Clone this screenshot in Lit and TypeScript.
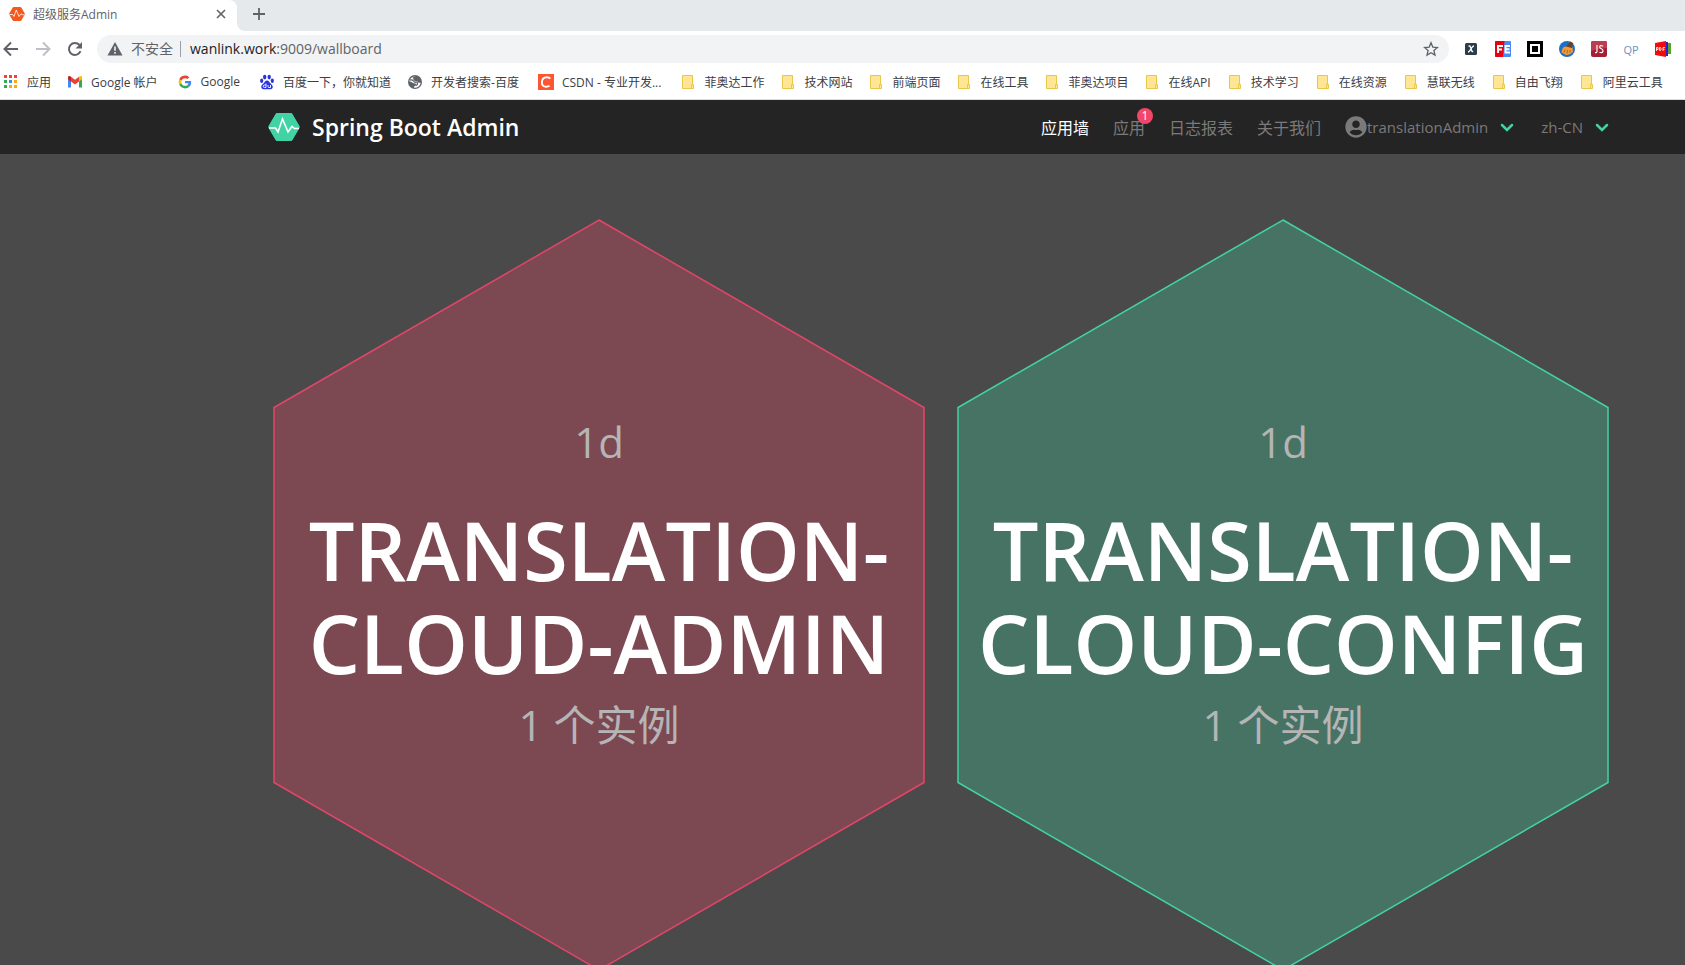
import { LitElement, html, css, svg } from "lit";
import { customElement, property } from "lit/decorators.js";
import { classMap } from "lit/directives/class-map.js";

const fontStack = css`"Open Sans", "Noto Sans CJK SC", sans-serif`;

const folderIcon = html`<svg width="16" height="16" viewBox="0 0 16 16">
  <path d="M2.5 1.5h10v13h-10z" fill="#ffe694" stroke="#e9c64c" />
  <path d="M11.5 10.5h2v4h-2z" fill="#ffe694" stroke="#e9c64c" />
</svg>`;

const appsIcon = html`<svg width="16" height="16" viewBox="0 0 16 16">
  ${["#f44336", "#f44336", "#f44336", "#34a853", "#2196f3", "#fba912", "#34a853", "#fba912", "#fba912"].map(
    (c, i) => svg`<rect x=${1 + (i % 3) * 5} y=${1 + Math.floor(i / 3) * 5} width="3" height="3" fill=${c} />`,
  )}
</svg>`;

const gmailIcon = html`<svg width="16" height="16" viewBox="0 0 16 16">
  <path d="M1 4v9.5h3V7z" fill="#4285f4" />
  <path d="M15 4v9.5h-3V7z" fill="#34a853" />
  <path d="M1 3.5C1 2 2.5 1.6 4 2.7V7.5L1 5.3z" fill="#c5221f" />
  <path d="M15 3.5C15 2 13.5 1.6 12 2.7V7.5l3-2.2z" fill="#fbbc04" />
  <path d="M4 2.7l4 3 4-3v4.8l-4 3-4-3z" fill="#ea4335" />
</svg>`;

const googleIcon = html`<svg width="16" height="16" viewBox="-6 -6 60 60">
  <path fill="#ea4335" d="M24 9.5c3.540 0 6.710 1.220 9.210 3.600l6.850-6.850C35.900 2.380 30.470 0 24 0 14.620 0 6.510 5.380 2.560 13.220l7.980 6.190C12.430 13.720 17.740 9.500 24 9.500z" />
  <path fill="#4285f4" d="M46.980 24.550c0-1.570-.15-3.090-.38-4.550H24v9.020h12.940c-.58 2.960-2.260 5.480-4.780 7.180l7.730 6c4.510-4.180 7.090-10.360 7.090-17.650z" />
  <path fill="#fbbc05" d="M10.530 28.590a14.500 14.500 0 0 1 0-9.180l-7.980-6.190a24 24 0 0 0 0 21.560z" />
  <path fill="#34a853" d="M24 48c6.480 0 11.930-2.130 15.890-5.810l-7.730-6c-2.150 1.450-4.920 2.300-8.160 2.300-6.260 0-11.570-4.220-13.470-9.910l-7.980 6.190C6.510 42.620 14.620 48 24 48z" />
</svg>`;

const baiduIcon = html`<svg width="16" height="16" viewBox="0 0 16 16" fill="#2932e1">
  <ellipse cx="5.7" cy="3.1" rx="1.7" ry="2.3" />
  <ellipse cx="10.2" cy="3.1" rx="1.7" ry="2.3" />
  <ellipse cx="2.7" cy="6.8" rx="1.6" ry="2.2" />
  <ellipse cx="13.3" cy="6.8" rx="1.6" ry="2.2" />
  <path d="M8 6.5c1.7 0 2.3 1.8 3.6 3 1.5 1.3 2.6 2.4 2 4.2-.7 2-3 1.6-5.6 1.5-2.6.1-4.9.5-5.6-1.5-.6-1.8.5-2.9 2-4.2C5.7 8.3 6.3 6.5 8 6.5z" />
  <path d="M7 9.5v4H5.5a1.2 1.2 0 0 1 0-2.500H7M9 11v1.500q0 1 1 1h1.500V11" fill="none" stroke="#fff" stroke-width=".9" />
</svg>`;

const globeIcon = html`<svg width="16" height="16" viewBox="0 0 16 16">
  <circle cx="8" cy="8" r="7" fill="#5f6368" />
  <path d="M9 2.600Q6 3 6.200 5T9 7.200t2.500 1.500h2.200A5.800 5.800 0 0 1 7 13.700q0-1.700 1.500-2.200T8 9.200H6.500Q4.500 7.500 2.300 7.200A5.800 5.800 0 0 1 9 2.600z" fill="#fff" />
  <path d="M3 6q2.500-.5 3.500 1t2.500 1.200 1.500 1.300-1.800 2" fill="none" stroke="#5f6368" stroke-width="1.300" />
  <path d="M5.500 3.200Q8 3 8 4.500T10.500 6.500" fill="none" stroke="#5f6368" />
</svg>`;

const csdnIcon = html`<svg width="16" height="16" viewBox="0 0 16 16">
  <rect width="16" height="16" fill="#fc5531" />
  <path d="M12.300 4.600C11.500 3.700 10.300 3.200 9 3.200 6 3.200 4 5.300 3.900 8.300c-.1 2.900 1.600 4.500 4.300 4.500 1.300 0 2.500-.4 3.400-1.200" fill="none" stroke="#fff" stroke-width="1.900" />
</svg>`;

const pulseHex = (size: number, color: string) => html`<svg width=${size} height=${size} viewBox="0 0 32 32">
  <path d="M9 2h14q1 0 1.500.9l7 12.200q.5.900 0 1.800l-7 12.200q-.5.900-1.500.9H9q-1 0-1.500-.9l-7-12.200q-.5-.9 0-1.800l7-12.200Q8 2 9 2z" fill=${color} />
  <path d="M1 17h6.500l2.500 4 4.500-13 5.500 13 4-5.500 2.500 2H31" fill="none" stroke="#fff" stroke-width="1.600" />
</svg>`;

interface Bookmark {
  label: string;
  icon: unknown;
  site?: boolean;
}

const bookmarks: Bookmark[] = [
  { label: "应用", icon: appsIcon },
  { label: "Google 帐户", icon: gmailIcon, site: true },
  { label: "Google", icon: googleIcon, site: true },
  { label: "百度一下，你就知道", icon: baiduIcon },
  { label: "开发者搜索-百度", icon: globeIcon, site: true },
  { label: "CSDN - 专业开发...", icon: csdnIcon, site: true },
  ...["菲奥达工作", "技术网站", "前端页面", "在线工具", "菲奥达项目", "在线API", "技术学习", "在线资源", "慧联无线", "自由飞翔", "阿里云工具"].map(
    (label) => ({ label, icon: folderIcon }),
  ),
];

const extensions = [
  {
    name: "XPath",
    icon: html`<svg width="16" height="16" viewBox="0 0 16 16">
      <rect x="2" y="2" width="12" height="12" rx="1.500" fill="#2b3d4a" />
      <path d="M5.500 5h1q.6 0 .9 1l1.200 3.500q.3 1.200 1.600 1M11 5q-1 0-2 1.300L7 9.300Q6 11 5 11" fill="none" stroke="#fff" stroke-width="1.300" />
    </svg>`,
  },
  {
    name: "FeHelper",
    icon: html`<svg width="16" height="16" viewBox="0 0 16 16">
      <rect width="16" height="16" rx="1" fill="#4a8af4" />
      <path d="M1 0h8.500L8 16H1q-1 0-1-1V1q0-1 1-1z" fill="#e60012" />
      <path d="M3 12V5h5M3 8.500h4M15 5h-4.500v6.500H15M10.500 8.300h4" fill="none" stroke="#fff" stroke-width="1.900" />
    </svg>`,
  },
  {
    name: "二维码",
    icon: html`<svg width="16" height="16" viewBox="0 0 16 16">
      <rect width="16" height="16" fill="#000" />
      <rect x="3" y="3" width="10" height="10" fill="#fff" />
      <rect x="5" y="5" width="6" height="6" fill="#000" />
    </svg>`,
  },
  {
    name: "清理",
    icon: html`<svg width="16" height="16" viewBox="0 0 16 16">
      <circle cx="8" cy="8" r="8" fill="#1a6fc9" />
      <path d="M2.500 11.500Q3 7 5 6l5-1.500 3.500 2 .5 4.500q-3 3.500-7 3z" fill="#f09a3a" />
      <path d="M7 5.500l4.500-5 2.500 1.500-1 5z" fill="#6b4023" />
      <path d="M5 11.500l1-3M8 12.500l.5-3.500M11 12l0-3" stroke="#b8651b" />
    </svg>`,
  },
  {
    name: "JS",
    icon: html`<svg width="16" height="16" viewBox="0 0 16 16">
      <rect width="16" height="16" rx="2" fill="#a41e35" />
      <path d="M0 2q0-2 2-2h12q2 0 2 2v5q-8 0-16 3z" fill="#bd3c4e" />
      <path d="M6 4v6.500q0 1.300-2 1.200M12 5.200Q8.700 3.500 8.700 6q0 1.200 1.600 1.700T12 9.700q0 2.700-3.600 1.500" fill="none" stroke="#fff" stroke-width="1.200" />
    </svg>`,
  },
  { name: "QP", icon: html`<span class="qp">QP</span>` },
  {
    name: "PDF",
    icon: html`<svg width="16" height="16" viewBox="0 0 16 16">
      <path d="M12 2h4v11h-4z" fill="#5aa02c" />
      <path d="M9 1h4v14H9z" fill="#2a1fd0" />
      <path d="M0 2l11-2v16L0 14z" fill="#f30b0b" />
      <path d="M1.500 10V6.500h1.500v2H1.500M4.500 6.500v3h1l.7-1.500-.7-1.500zM8 10V6.500h2M8 8.300h1.500" fill="none" stroke="#fff" stroke-width=".8" />
    </svg>`,
  },
];

@customElement("browser-chrome")
export class BrowserChrome extends LitElement {
  static styles = css`
    :host {
      display: block;
      font-family: ${fontStack};
      font-size: 12px;
      color: #3c4043;
      background: #fff;
    }
    button {
      border: 0;
      padding: 0;
      background: none;
      font: inherit;
      color: inherit;
      display: inline-flex;
      align-items: center;
      justify-content: center;
    }
    svg {
      display: block;
      flex: none;
    }
    .tabs {
      display: flex;
      height: 31px;
      background: #e6e9ec;
    }
    .tab {
      display: flex;
      align-items: center;
      width: 237px;
      box-sizing: border-box;
      padding: 0 10px 3px 9px;
      background: #fff;
      border-top-right-radius: 8px;
      color: #5f6368;
    }
    .tab-title {
      flex: 1;
      padding-left: 8px;
    }
    .tabs-fill {
      flex: 1;
      display: flex;
      background: #fff;
    }
    .new-tab {
      flex: 1;
      display: flex;
      align-items: center;
      padding: 0 0 3px 15px;
      border-bottom-left-radius: 8px;
      background: #e6e9ec;
    }
    .toolbar {
      display: flex;
      align-items: center;
      height: 36px;
      padding-right: 14px;
    }
    .nav-buttons {
      display: flex;
      gap: 16px;
      padding-left: 3px;
      width: 94px;
    }
    .omnibox {
      flex: 1;
      display: flex;
      align-items: center;
      height: 28px;
      border-radius: 14px;
      background: #f1f3f4;
      padding: 0 10px;
      font-size: 14px;
      color: #5f6368;
    }
    .insecure {
      padding: 0 7px 2px 8px;
    }
    .divider {
      width: 1px;
      height: 16px;
      background: #9aa0a6;
      margin-right: 9px;
    }
    .url {
      flex: 1;
      padding-bottom: 2px;
    }
    .host {
      color: #202124;
    }
    .extensions {
      display: flex;
      gap: 16px;
      padding-left: 14px;
    }
    .extensions button {
      width: 16px;
      height: 16px;
    }
    .qp {
      font-size: 11px;
      color: #6b8fc0;
    }
    .bookmarks {
      display: flex;
      align-items: center;
      gap: 16px;
      height: 29px;
      padding: 0 0 3px 3px;
      border-bottom: 1px solid #dadce0;
      overflow: hidden;
    }
    .bookmark {
      display: flex;
      align-items: center;
      gap: 8px;
      color: inherit;
      text-decoration: none;
      white-space: nowrap;
    }
    .site {
      padding-right: 3px;
    }
  `;

  render() {
    return html`
      <div class="tabs">
        <div class="tab">
          ${pulseHex(16, "#f4581c")}
          <span class="tab-title">超级服务Admin</span>
          <button aria-label="关闭标签页">
            <svg width="12" height="12" viewBox="0 0 12 12"><path d="M2 2l8 8M10 2l-8 8" stroke="#5f6368" stroke-width="1.600" /></svg>
          </button>
        </div>
        <div class="tabs-fill">
          <div class="new-tab">
            <button aria-label="新标签页">
              <svg width="14" height="14" viewBox="0 0 14 14"><path d="M7 1v12M1 7h12" stroke="#5f6368" stroke-width="1.800" /></svg>
            </button>
          </div>
        </div>
      </div>
      <div class="toolbar">
        <div class="nav-buttons">
          <button aria-label="后退">
            <svg width="16" height="16" viewBox="0 0 16 16"><path d="M15 8H2M8 1.500L1.500 8 8 14.500" fill="none" stroke="#5f6368" stroke-width="2" /></svg>
          </button>
          <button aria-label="前进">
            <svg width="16" height="16" viewBox="0 0 16 16"><path d="M1 8h13M8 1.500L14.500 8 8 14.500" fill="none" stroke="#bdc1c6" stroke-width="2" /></svg>
          </button>
          <button aria-label="刷新">
            <svg width="16" height="16" viewBox="0 0 16 16">
              <path d="M13.500 10.200A6 6 0 1 1 12.500 4" fill="none" stroke="#5f6368" stroke-width="2" />
              <path d="M15 1v6.500H8.500z" fill="#5f6368" />
            </svg>
          </button>
        </div>
        <div class="omnibox">
          <svg width="16" height="16" viewBox="0 0 16 16">
            <path d="M8 1l7.500 13.500H.5z" fill="#5f6368" />
            <path d="M8 5.500v4.300M8 11v1.700" stroke="#f1f3f4" stroke-width="1.600" />
          </svg>
          <span class="insecure">不安全</span>
          <span class="divider"></span>
          <span class="url"><span class="host">wanlink.work</span>:9009/wallboard</span>
          <button aria-label="为此标签页添加书签">
            <svg width="16" height="16" viewBox="0 0 16 16">
              <path d="M8 1.800l1.800 4.300 4.700.4-3.600 3 1.100 4.600L8 11.700l-4 2.400 1.100-4.600-3.600-3 4.700-.4z" fill="none" stroke="#5f6368" stroke-width="1.300" />
            </svg>
          </button>
        </div>
        <div class="extensions">
          ${extensions.map((e) => html`<button aria-label=${e.name}>${e.icon}</button>`)}
        </div>
      </div>
      <nav class="bookmarks">
        ${bookmarks.map(
          (b) => html`<a class=${classMap({ bookmark: true, site: !!b.site })} href="#">${b.icon}<span>${b.label}</span></a>`,
        )}
      </nav>
    `;
  }
}

@customElement("app-navbar")
export class AppNavbar extends LitElement {
  static styles = css`
    :host {
      display: block;
      background: #242424;
      font-family: ${fontStack};
      font-size: 16px;
      color: #7a7a7a;
    }
    .bar {
      display: flex;
      align-items: center;
      justify-content: space-between;
      height: 54px;
      padding: 0 73px 0 268px;
    }
    a {
      color: inherit;
      text-decoration: none;
    }
    svg {
      display: block;
      flex: none;
    }
    .brand {
      display: flex;
      align-items: center;
      gap: 12px;
      color: #fff;
      font-size: 23px;
      font-weight: 600;
    }
    .menu {
      display: flex;
      align-items: center;
      gap: 24px;
    }
    .active {
      color: #fff;
    }
    .with-badge {
      position: relative;
    }
    .badge {
      position: absolute;
      top: -7px;
      right: -8px;
      width: 16px;
      height: 16px;
      border-radius: 8px;
      background: #f14668;
      color: #fff;
      font-size: 12px;
      line-height: 16px;
      text-align: center;
    }
    .dropdown {
      display: flex;
      align-items: center;
      border: 0;
      padding: 0 3px 0 0;
      background: none;
      font: inherit;
      font-size: 15px;
      color: inherit;
    }
    .chevron {
      margin-left: 12px;
    }
  `;

  render() {
    const chevron = html`<svg class="chevron" width="14" height="10" viewBox="0 0 14 10">
      <path d="M2 3l5 5 5-5" fill="none" stroke="#42d3a5" stroke-width="2.500" stroke-linecap="round" />
    </svg>`;
    return html`
      <div class="bar">
        <a class="brand" href="#">${pulseHex(32, "#42d3a5")}<span>Spring Boot Admin</span></a>
        <nav class="menu">
          <a class="active" href="#">应用墙</a>
          <a class="with-badge" href="#">应用<span class="badge">1</span></a>
          <a href="#">日志报表</a>
          <a href="#">关于我们</a>
          <button class="dropdown">
            <svg width="22" height="22" viewBox="0 0 496 512">
              <path fill="#7a7a7a" d="M248 8C111 8 0 119 0 256s111 248 248 248 248-111 248-248S385 8 248 8zm0 96c48.600 0 88 39.400 88 88s-39.400 88-88 88-88-39.400-88-88 39.400-88 88-88zm0 344c-58.700 0-111.300-26.600-146.500-68.200 18.800-35.400 55.600-59.800 98.500-59.800 2.400 0 4.800.4 7.100 1.100 13 4.200 26.600 6.900 40.900 6.900s28-2.700 40.900-6.900c2.300-.7 4.700-1.100 7.100-1.100 42.900 0 79.700 24.400 98.500 59.800C359.300 421.400 306.700 448 248 448z" />
            </svg>
            <span>translationAdmin</span>${chevron}
          </button>
          <button class="dropdown"><span>zh-CN</span>${chevron}</button>
        </nav>
      </div>
    `;
  }
}

@customElement("wall-hexagon")
export class WallHexagon extends LitElement {
  @property() name = "";
  @property() uptime = "";
  @property({ type: Number }) instances = 0;
  @property({ type: Boolean }) up = false;

  static styles = css`
    :host {
      display: grid;
      font-family: ${fontStack};
    }
    .shape,
    .content {
      grid-area: 1 / 1;
    }
    .shape {
      display: block;
      width: 100%;
      overflow: visible;
      fill: rgba(241, 70, 104, 0.3);
      stroke: #e4456a;
    }
    .shape.up {
      fill: rgba(66, 211, 165, 0.3);
      stroke: #42d3a5;
    }
    .content {
      display: flex;
      flex-direction: column;
      align-items: center;
      justify-content: center;
      padding-bottom: 24px;
      text-align: center;
      color: #b5b5b5;
      font-size: 42px;
      line-height: 64px;
    }
    .name {
      margin: 29px 0 4px;
      color: #fff;
      font-size: 81px;
      font-weight: 600;
      line-height: 93px;
    }
    .uptime,
    .count {
      margin: 0;
    }
  `;

  render() {
    return html`
      <svg class=${classMap({ shape: true, up: this.up })} viewBox="0 0 650 750">
        <path stroke-width="1.500" d="M325 0L650 187.500V562.500L325 750L0 562.500V187.500Z" />
      </svg>
      <div class="content">
        <p class="uptime">${this.uptime}</p>
        <h1 class="name">${this.name}</h1>
        <p class="count">${this.instances} 个实例</p>
      </div>
    `;
  }
}

@customElement("app-root")
export class AppRoot extends LitElement {
  static styles = css`
    :host {
      display: flex;
      flex-direction: column;
      height: 100vh;
      overflow: hidden;
      background: #4a4a4a;
    }
    .wall {
      flex: 1;
      min-height: 0;
      display: grid;
      grid-template-columns: 1fr 1fr;
      align-items: start;
      gap: 34px;
      padding: 66px 77px 0 274px;
    }
  `;

  render() {
    return html`
      <browser-chrome></browser-chrome>
      <app-navbar></app-navbar>
      <main class="wall">
        <wall-hexagon name="TRANSLATION-CLOUD-ADMIN" uptime="1d" .instances=${1}></wall-hexagon>
        <wall-hexagon name="TRANSLATION-CLOUD-CONFIG" uptime="1d" .instances=${1} .up=${true}></wall-hexagon>
      </main>
    `;
  }
}
